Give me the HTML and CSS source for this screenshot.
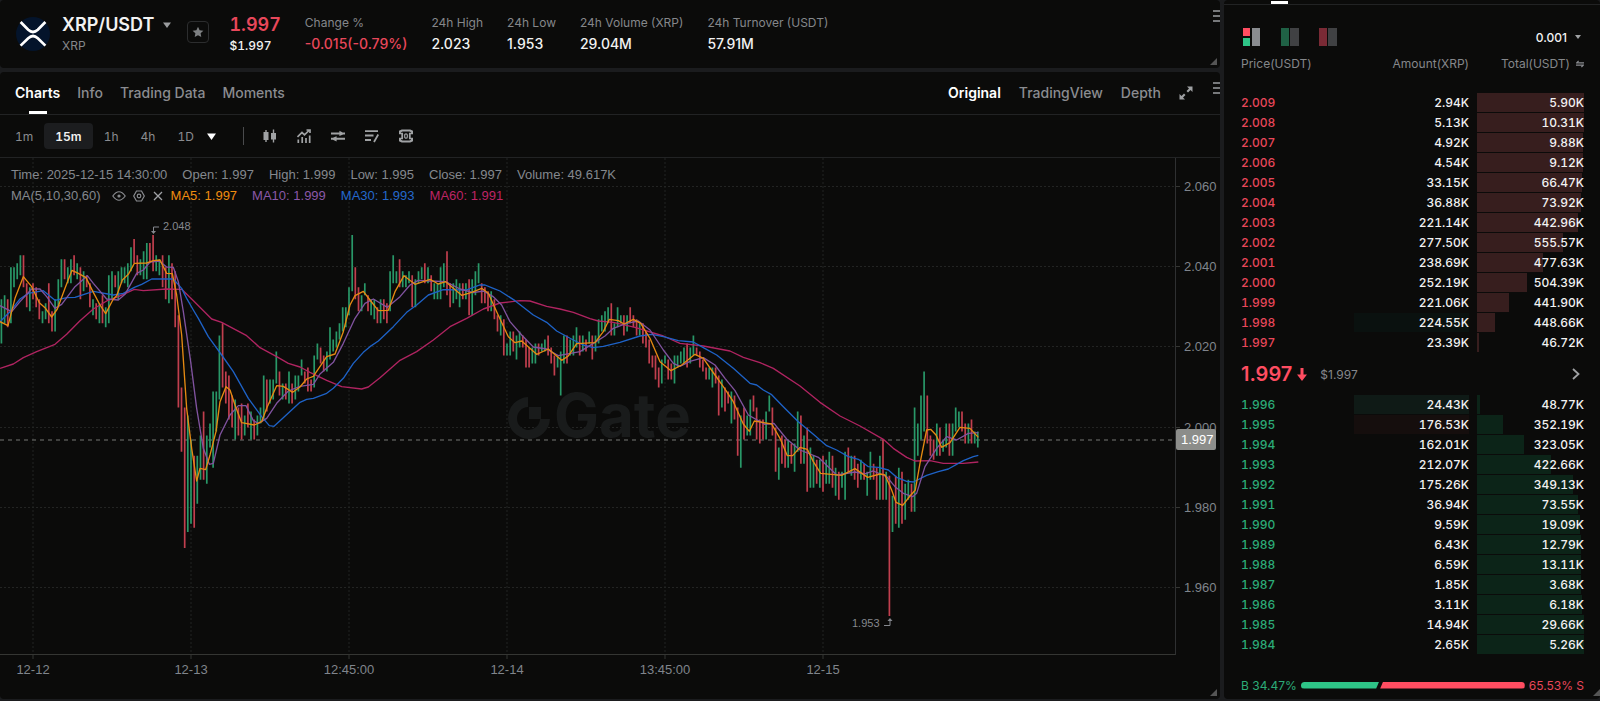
FILE: index.html
```
<!DOCTYPE html>
<html lang="en">
<head>
<meta charset="UTF-8">
<meta name="viewport" content="width=device-width, initial-scale=1">
<title>XRP/USDT</title>
<link rel="stylesheet" href="styles.css">
</head>
<body>
<div class="app">
  <div class="main">

    <header class="panel ticker">
      <svg class="coin" viewBox="0 0 34 34"><circle cx="17" cy="17" r="17" fill="#04142b"/><g fill="none" stroke="#fff" stroke-width="2.7"><path d="M4.6 5l7.6 7.8q4.8 4.4 9.6 0L29.4 5"/><path d="M4.6 28.6l7.6-7.4q4.8-4.4 9.6 0l7.6 7.4"/></g></svg>
      <div class="pair">
        <button class="pair-name">XRP/USDT <svg width="8" height="6" viewBox="0 0 8 6"><path d="M0 .5h8L4 6z" fill="#9a9c9e"/></svg></button>
        <span class="pair-sub">XRP</span>
      </div>
      <button class="star" aria-label="Add to favorites"><svg width="12" height="12" viewBox="0 0 12 12"><path d="M6 .8l1.6 3.4 3.8.5-2.8 2.6.7 3.8L6 9.300l-3.300 1.800.7-3.800L.6 4.700l3.800-.5z" fill="#7e8082"/></svg></button>
      <div class="last">
        <strong class="red">1.997</strong>
        <span>$1.997</span>
      </div>
      <dl class="stats">
        <div><dt>Change %</dt><dd class="red">-0.015(-0.79%)</dd></div>
        <div><dt>24h High</dt><dd>2.023</dd></div>
        <div><dt>24h Low</dt><dd>1.953</dd></div>
        <div><dt>24h Volume (XRP)</dt><dd>29.04M</dd></div>
        <div><dt>24h Turnover (USDT)</dt><dd>57.91M</dd></div>
      </dl>
      <span class="grip"></span>
      <span class="corner"></span>
    </header>

    <section class="panel chart-panel">
      <span class="grip"></span>
      <nav class="tabs">
        <button class="tab active marked">Charts</button>
        <button class="tab">Info</button>
        <button class="tab">Trading Data</button>
        <button class="tab">Moments</button>
        <div class="views">
          <button class="tab active">Original</button>
          <button class="tab">TradingView</button>
          <button class="tab">Depth</button>
          <button class="expand" aria-label="Full screen"><svg width="14" height="14" viewBox="0 0 14 14" fill="#9fa1a3"><path d="M8 .5h5.500V6l-2-2-2.500 2.500-1.500-1.500L10 2.500zM.5 8l2 2L5 7.500 6.500 9 4 11.500l2 2H.5z"/></svg></button>
        </div>
      </nav>

      <div class="toolbar">
        <button class="tf">1m</button>
        <button class="tf active">15m</button>
        <button class="tf">1h</button>
        <button class="tf">4h</button>
        <button class="tf">1D</button>
        <button class="tool more" aria-label="More intervals"><svg width="9" height="7" viewBox="0 0 9 7"><path d="M0 .5h9L4.500 7z" fill="#fff"/></svg></button>
        <span class="divider"></span>
        <button class="tool" aria-label="Candle style"><svg width="14" height="14" viewBox="0 0 14 14" fill="#a0a2a4"><path d="M.5 3h5v8h-5zM2.300 1h1.400v12H2.300zM8 4h5v6.500H8zM9.800.5h1.400v13H9.800z"/></svg></button>
        <button class="tool" aria-label="Indicators"><svg width="14" height="14" viewBox="0 0 14 14" fill="none" stroke="#a0a2a4" stroke-width="1.700"><path d="M.5 8L5 3.500l2.500 2.300L12.500 1M9.500 1H13v3M1.300 10.500V14M5.200 8v6M9 9v5M12.700 6.500V14"/></svg></button>
        <button class="tool" aria-label="Compare"><svg width="14" height="14" viewBox="0 0 15 14" fill="#a0a2a4"><path d="M0 3.300h9V1.300l4 2.300V3.300h2v2h-2L9 7V5.300H0zM15 9H6V7.300L2 9H0v2h2l4 2v-2h9z"/></svg></button>
        <button class="tool" aria-label="Drawing tools"><svg width="14" height="14" viewBox="0 0 14 14" fill="none" stroke="#a0a2a4" stroke-width="1.800"><path d="M0 2.200h13M0 6.500h8.500M0 11h6M13.300 5.500l-4.300 7.500"/></svg></button>
        <button class="tool" aria-label="Settings"><svg width="14" height="14" viewBox="0 0 14 14" fill="none" stroke="#a0a2a4"><path d="M1 4V2.500L3 1.500h8l2 1V4M1 10v1.500l2 1h8l2-1V10" stroke-width="2.200"/><path d="M0 4.500h4M10 4.500h4M0 9.500h4M10 9.500h4" stroke-width="1.600"/><path d="M3.200 4.500v5M10.800 4.500v5" stroke-width="1.800"/><rect x="5.700" y="4.800" width="2.600" height="4.400" rx="1.300" stroke-width="1.200"/></svg></button>
      </div>

      <div class="chart">
        <svg class="plot" id="plot">
          <g class="grid" id="grid"></g>
          <g class="watermark">
            <path d="M528 239a21 21 0 1 0 22 22h-10a11.500 11.500 0 1 1-12-12z"/>
            <rect x="529" y="249" width="12" height="12"/>
            <text x="554" y="279">Gate</text>
          </g>
          <line class="now" x1="0" x2="100%" y1="282" y2="282"/>
          <path id="up" class="up"/>
          <path id="down" class="down"/>
          <!-- moving averages, on a grid three times as fine as the plot -->
          <g class="ma" transform="translate(0 -3) scale(.33333)">
            <polyline class="ma60" points="0,640 40,627 70,608 110,590 165,568 200,538 240,497 280,462 320,438 355,425 403,403 430,407 500,402 545,403 575,432 635,492 665,502 740,542 780,578 830,605 865,625 900,636 930,652 980,676 1025,695 1085,702 1105,696 1140,668 1200,616 1250,590 1300,555 1350,515 1400,490 1450,462 1500,444 1560,437 1590,438 1640,454 1680,462 1720,472 1770,491 1795,498 1840,502 1905,517 1990,543 2040,565 2110,573 2190,588 2230,607 2280,623 2320,640 2400,693 2460,742 2520,783 2580,813 2650,853 2680,880 2720,907 2745,918 2790,917 2830,925 2890,925 2935,921"/>
            <polyline class="ma30" points="0,500 30,470 60,432 85,415 130,407 165,436 200,428 225,427 280,409 340,420 370,415 403,397 425,388 455,372 520,372 545,400 560,430 580,465 595,490 625,545 665,600 700,650 745,730 785,785 808,812 822,814 845,793 900,742 920,733 940,730 980,715 1000,700 1030,670 1060,625 1090,592 1110,575 1135,558 1180,515 1220,472 1250,450 1285,420 1330,404 1400,405 1440,390 1455,390 1480,400 1500,408 1545,437 1600,480 1640,502 1670,528 1720,555 1750,570 1780,578 1810,574 1860,562 1920,543 1955,538 1990,545 2035,557 2080,561 2110,578 2150,600 2200,640 2250,685 2270,690 2290,705 2315,719 2350,755 2395,800 2440,838 2480,872 2510,885 2545,905 2575,913 2605,935 2635,937 2665,945 2690,967 2720,979 2740,981 2780,961 2815,950 2845,942 2890,917 2920,905 2935,901"/>
            <polyline class="ma10" points="0,452 35,470 60,440 95,402 120,402 140,425 165,460 185,448 225,395 262,362 280,385 320,432 355,435 375,418 410,355 430,345 450,321 478,318 500,336 520,337 535,380 550,470 572,620 590,760 610,880 628,928 640,925 660,840 690,780 715,752 738,752 760,797 775,805 800,790 830,745 865,708 900,694 940,688 960,657 1000,622 1030,565 1065,490 1095,445 1120,432 1162,457 1200,425 1230,390 1255,376 1290,378 1337,380 1380,402 1420,413 1450,408 1480,425 1505,450 1530,500 1565,540 1600,576 1640,582 1675,602 1740,590 1780,565 1815,543 1840,520 1880,505 1915,498 1950,525 1990,585 2020,625 2040,634 2070,619 2110,608 2145,630 2175,670 2205,707 2245,780 2280,800 2295,808 2322,805 2360,852 2400,885 2455,907 2510,960 2565,951 2595,957 2620,948 2660,965 2685,995 2710,1015 2738,1025 2750,1015 2775,935 2810,880 2840,845 2870,855 2905,835 2935,833"/>
            <polyline class="ma5" points="0,500 24,512 45,430 70,365 95,395 118,443 135,458 155,486 172,462 195,400 216,346 235,355 258,368 280,412 300,450 317,476 340,432 350,422 367,375 385,358 403,325 440,324 460,317 480,315 500,355 517,356 530,420 545,540 560,760 575,880 590,978 600,940 617,944 630,900 648,830 660,740 678,695 690,705 705,750 725,803 763,810 785,800 800,760 830,692 850,694 878,712 900,696 920,672 940,664 980,605 1005,597 1030,530 1050,450 1065,422 1090,409 1110,435 1135,467 1165,466 1185,410 1212,362 1245,388 1290,373 1315,387 1337,380 1385,421 1415,412 1445,400 1465,415 1490,470 1525,545 1545,563 1565,558 1610,598 1645,582 1685,616 1705,603 1730,566 1785,563 1810,530 1828,493 1855,497 1872,507 1900,493 1922,505 1950,550 1980,620 2013,647 2045,630 2085,598 2110,610 2145,660 2170,695 2200,740 2230,807 2248,829 2263,798 2315,807 2340,850 2362,902 2378,902 2400,877 2422,883 2440,920 2462,955 2525,961 2565,941 2603,967 2640,957 2655,960 2675,1005 2688,1042 2708,1051 2730,1023 2746,1005 2760,925 2780,825 2792,823 2808,840 2825,877 2850,863 2880,817 2910,820 2935,847"/>
          </g>
          <g class="mark">
            <path d="M159 69h-5.500v5"/><path class="head" d="M151 73h5l-2.500 3z"/>
            <text x="163" y="72">2.048</text>
            <path d="M884 467.500h6v-5"/><path class="head" d="M887.500 463h5l-2.500-3z"/>
            <text x="852" y="469">1.953</text>
          </g>
        </svg>
        <svg class="price-axis" id="priceAxis"></svg>
        <svg class="time-axis" id="timeAxis"></svg>
        <div class="legend">
          <p><span>Time: 2025-12-15 14:30:00</span><span>Open: 1.997</span><span>High: 1.999</span><span>Low: 1.995</span><span>Close: 1.997</span><span>Volume: 49.617K</span></p>
          <p>
            <span class="ma-name">MA(5,10,30,60)
              <button aria-label="Hide"><svg width="14" height="12" viewBox="0 0 14 12" fill="none" stroke="#8a8c90" stroke-width="1.200"><path d="M.8 6Q7-2.500 13.200 6 7 14.500.8 6z"/><circle cx="7" cy="6" r="1" fill="#8a8c90"/></svg></button>
              <button aria-label="Settings"><svg width="12" height="12" viewBox="0 0 12 12" fill="none" stroke="#8a8c90" stroke-width="1.200"><path d="M3.500 1h5L11.300 6 8.500 11h-5L.7 6z"/><circle cx="6" cy="6" r="1.800"/></svg></button>
              <button aria-label="Remove"><svg width="12" height="12" viewBox="0 0 12 12" stroke="#a0a2a6" stroke-width="1.300"><path d="M2 2l8 8M10 2l-8 8"/></svg></button>
            </span>
            <span class="c5">MA5: 1.997</span><span class="c10">MA10: 1.999</span><span class="c30">MA30: 1.993</span><span class="c60">MA60: 1.991</span>
          </p>
        </div>
      </div>
      <span class="corner"></span>
    </section>
  </div>

  <aside class="panel book">
    <div class="book-tabs"><span></span></div>
    <div class="book-tools">
      <button aria-label="Both sides"><svg width="18" height="18" viewBox="0 0 18 18"><path d="M0 0h7v8H0z" fill="#ff4d61"/><path d="M0 10h7v8H0z" fill="#2ec487"/><path d="M9 0h8v18H9z" fill="#8a8c90"/></svg></button>
      <button aria-label="Bids only"><svg width="18" height="18" viewBox="0 0 18 18"><path d="M0 0h8v18H0z" fill="#1f6145"/><path d="M9 0h9v18H9z" fill="#404143"/></svg></button>
      <button aria-label="Asks only"><svg width="18" height="18" viewBox="0 0 18 18"><path d="M0 0h8v18H0z" fill="#7a2a35"/><path d="M9 0h9v18H9z" fill="#404143"/></svg></button>
      <label class="step"><select aria-label="Price step"><option>0.001</option><option>0.01</option></select><svg width="6" height="4" viewBox="0 0 6 4"><path d="M0 0h6L3 4z" fill="#a0a2a4"/></svg></label>
    </div>
    <table>
      <thead>
        <tr><th>Price(USDT)</th><th class="amount">Amount(XRP)</th><th class="total">Total(USDT)<svg width="8" height="8" viewBox="0 0 8 8" fill="none" stroke="#8a8c90" stroke-width="1.200"><path d="M8 2.800H.8L2.600.8M0 5.200h7.200L5.400 7.200"/></svg></th></tr>
      </thead>
      <tbody id="asks" class="asks"></tbody>
      <tbody>
        <tr><td colspan="3">
          <div class="mid">
            <strong>1.997</strong>
            <svg width="10" height="13" viewBox="0 0 10 13"><path d="M3.500 0h3v6.500H10L5 13 0 6.500h3.500z" fill="#ff4d61"/></svg>
            <span>$1.997</span>
            <button aria-label="More"><svg width="8" height="12" viewBox="0 0 8 12" fill="none" stroke="#a0a2a4" stroke-width="1.800"><path d="M1 1l5.500 5L1 11"/></svg></button>
          </div>
        </td></tr>
      </tbody>
      <tbody id="bids" class="bids"></tbody>
    </table>
    <div class="ratio">
      <span class="green">B 34.47%</span>
      <div class="ratio-bar"><i class="buy" style="width: 35%"></i><i class="sell"></i></div>
      <span class="red">65.53% S</span>
    </div>
    <span class="corner"></span>
  </aside>
</div>
<script src="chart.js"></script>
</body>
</html>
```
FILE: styles.css
```
* {
  box-sizing: border-box;
}

body {
  margin: 0;
  background: #1b1c1e;
  color: #f2f2f2;
  font-family: Inter, "Liberation Sans", sans-serif;
  font-size: 12px;
}

button, select {
  margin: 0;
  padding: 0;
  border: 0;
  background: none;
  color: inherit;
  font: inherit;
  cursor: pointer;
}

svg {
  display: block;
}

p, dl, dd {
  margin: 0;
}

.app {
  display: grid;
  grid-template-columns: 1fr 376px;
  gap: 4px;
  min-height: 100vh;
  padding-bottom: 2px;
}

.main {
  display: flex;
  flex-direction: column;
  gap: 4px;
  min-width: 0;
}

.panel {
  position: relative;
  background: #0b0b0a;
  border-radius: 4px;
}

.red { color: #e8475a; }
.green { color: #2cab78; }

/* drag handle and resize corner of a panel */
.grip {
  position: absolute;
  top: 10px;
  right: 0;
  width: 7px;
  height: 12px;
  background: repeating-linear-gradient(#77797b 0 2px, transparent 2px 5px);
}

.corner {
  position: absolute;
  right: 3px;
  bottom: 3px;
  border-left: 7px solid transparent;
  border-bottom: 7px solid #555;
}

.book .corner {
  right: 0;
}

/* ticker */
.ticker {
  display: flex;
  align-items: center;
  height: 68px;
  padding-left: 16px;
}

.coin {
  width: 34px;
  height: 34px;
}

.pair {
  display: flex;
  flex-direction: column;
  margin-left: 12px;
}

.pair-name {
  display: flex;
  align-items: center;
  gap: 9px;
  font-size: 18px;
  font-weight: 600;
  line-height: 24px;
}

.pair-sub {
  color: #85878a;
  line-height: 18px;
}

.star {
  display: flex;
  align-items: center;
  justify-content: center;
  width: 22px;
  height: 22px;
  margin: 0 20px 4px 16px;
  border: 1px solid #2c2d2e;
  border-radius: 4px;
}

.last, .toolbar, .cell {
  font-variant-numeric: tabular-nums;
}

.last {
  display: flex;
  flex-direction: column;
  font-weight: 500;
}

.last strong {
  font-size: 18px;
  font-weight: 600;
  line-height: 24px;
}

.last span {
  line-height: 18px;
}

.stats {
  display: flex;
  gap: 24px;
  margin-left: 24px;
}

.stats dt {
  color: #85878a;
  line-height: 20px;
}

.stats dd {
  font-size: 14px;
  font-weight: 500;
  line-height: 22px;
}

/* chart panel */
.chart-panel {
  display: flex;
  flex: 1;
  flex-direction: column;
}

.tabs {
  display: flex;
  gap: 17px;
  height: 43px;
  padding: 0 27px 0 15px;
  border-bottom: 1px solid #222324;
}

.tab {
  position: relative;
  padding-bottom: 2px;
  color: #8a8c90;
  font-size: 14px;
  font-weight: 500;
}

.tab.active {
  color: #fff;
  font-weight: 600;
}

.marked::after {
  content: "";
  position: absolute;
  bottom: 0;
  left: 50%;
  width: 18px;
  height: 3px;
  margin-left: -9px;
  background: #fff;
}

.views {
  display: flex;
  gap: 18px;
  margin-left: auto;
}

.toolbar {
  display: flex;
  align-items: center;
  height: 43px;
  padding-left: 4px;
  border-bottom: 1px solid #222324;
}

.tf {
  height: 26px;
  padding: 0 11px;
  color: #8a8c90;
  font-size: 12px;
}

.tf.active {
  border-radius: 4px;
  background: #1c1d1f;
  color: #f2f2f2;
  font-weight: 600;
}

.more {
  margin-left: 2px;
}

.divider {
  width: 1px;
  height: 18px;
  margin: 0 19px 0 27px;
  background: #4a4b4d;
}

.divider ~ .tool {
  margin-right: 20px;
}

.chart {
  position: relative;
  display: grid;
  flex: 1;
  grid-template-columns: minmax(0, 1fr) 44px;
  grid-template-rows: minmax(0, 1fr) 44px;
  font-family: "Liberation Sans", Arial, sans-serif;
}

.plot {
  width: 100%;
  height: 100%;
  border-right: 1px solid #2f3031;
  border-bottom: 1px solid #353633;
}

.price-axis, .time-axis {
  width: 100%;
  height: 100%;
  font-size: 13px;
  fill: #80858c;
}

.time-axis {
  text-anchor: middle;
}

.price-axis line, .time-axis line {
  stroke: #353633;
}

.price-axis .tag rect { fill: #8c8d8a; }
.price-axis .tag text { fill: #fff; }

.grid line {
  stroke: #232423;
  stroke-dasharray: 2 2;
}

.watermark {
  fill: #191b1b;
  font: 700 60px Inter, sans-serif;
}

.now {
  stroke: #777975;
  stroke-dasharray: 4 4;
}

.up { stroke: #299868; stroke-width: 1.700; }
.down { stroke: #c13f4e; stroke-width: 1.700; }

.ma {
  fill: none;
  stroke-width: 4;
  stroke-linejoin: round;
}

.ma5 { stroke: #e58a12; }
.ma10 { stroke: #80539f; }
.ma30 { stroke: #1e62c6; }
.ma60 { stroke: #b02461; }

.mark {
  fill: #85888e;
  font-size: 11px;
}

.mark path {
  fill: none;
  stroke: #85888e;
}

.mark .head {
  fill: #85888e;
  stroke: none;
}

.legend {
  position: absolute;
  top: 6px;
  left: 11px;
  color: #84888e;
  font-size: 13px;
}

.legend p {
  display: flex;
  gap: 15px;
  line-height: 21px;
}

.ma-name {
  display: flex;
  align-items: center;
  gap: 7px;
  margin-right: -8px;
}

.ma-name button:first-of-type {
  margin-left: 4px;
}

.c5 { color: #f08d10; }
.c10 { color: #8a58a8; }
.c30 { color: #2468cc; }
.c60 { color: #bd2465; }

/* order book */
.book {
  padding: 0 16px 0 17px;
}

.book-tabs {
  height: 5px;
  margin: 0 -16px 0 -17px;
  padding: 1px 0 0 47px;
  border-bottom: 1px solid #222324;
}

.book-tabs span {
  display: block;
  width: 17px;
  height: 3px;
  background: #fff;
}

.book-tools {
  display: flex;
  gap: 20px;
  height: 51px;
  padding: 23px 3px 0 2px;
}

.book-tools button {
  height: 18px;
}

.step {
  display: flex;
  align-items: center;
  gap: 8px;
  height: 18px;
  margin-left: auto;
}

.step select {
  appearance: none;
  color: #f2f2f2;
  font-weight: 500;
  text-align: right;
}

.step option {
  background: #0b0b0a;
}

.book table {
  width: 100%;
  table-layout: fixed;
  border-collapse: collapse;
}

.book th {
  height: 37px;
  padding: 0;
  color: #85878a;
  font-weight: 400;
  line-height: 16px;
  text-align: left;
  vertical-align: top;
}

.book th.amount, .book th.total {
  width: 115px;
  text-align: right;
}

.total svg {
  display: inline-block;
  margin-left: 6px;
}

.book td {
  height: 20px;
  padding: 0;
  font-weight: 500;
  vertical-align: top;
}

.cell {
  position: relative;
  height: 19px;
  line-height: 20px;
  text-align: right;
}

.price {
  text-align: left;
}

.asks .price { color: #e8475a; }
.bids .price { color: #2cab78; }

.total .cell {
  margin-left: 8px;
}

.total .cell span {
  position: relative;
}

.bar {
  position: absolute;
  top: 0;
  left: 0;
  height: 19px;
}

.asks .bar { background: #371e1e; }
.bids .bar { background: #0c2418; }

.flash-up { background: #0f1a16; }
.flash-up-soft { background: #0a110f; }
.flash-down { background: #150e0d; }

.mid {
  display: flex;
  align-items: center;
  height: 42px;
}

.mid strong {
  margin-right: 5px;
  color: #ff4d61;
  font-size: 20px;
  font-weight: 600;
}

.mid span {
  margin-left: 13px;
  color: #85878a;
  font-weight: 400;
}

.mid button {
  margin: 0 4px 0 auto;
}

.ratio {
  display: flex;
  align-items: center;
  gap: 4px;
  height: 20px;
  margin-top: 20px;
}

.ratio-bar {
  display: flex;
  flex: 1;
  height: 7px;
}

.buy {
  border-radius: 4px 0 0 4px;
  background: #2ec487;
  clip-path: polygon(0 0, 100% 0, calc(100% - 3px) 100%, 0 100%);
}

.sell {
  flex: 1;
  border-radius: 0 4px 4px 0;
  background: #ff4d61;
  clip-path: polygon(4px 0, 100% 0, 100% 100%, 1px 100%);
}
```
FILE: chart.js
```
// one candle per 15 minutes: colour, high and low, in thousandths above 1.900
var candles = `
g132-121 g133-126 r132-125 g140-126 g140-135 g141-137 g143-138 r143-135 r136-130 g135-129
r136-132 r135-130 r132-127 g129-126 g131-127 r136-126 r129-124 g132-124 g137-130 g142-135
r142-137 g140-136 g142-136 r143-138 g141-137 r140-132 g139-134 r138-135 r136-130 g132-128
r131-127 g131-126 r133-126 g130-125 g138-126 g139-132 r138-135 g139-132 g140-136 g140-136
g141-135 g145-139 r147-141 r143-138 g142-138 g144-137 g146-137 r146-141 r148-139 g143-139
g142-138 r143-135 r140-132 g143-131 r141-132 r139-125 r128-105 r110-94 r105-70 g103-74
g97-76 r93-75 g93-81 g98-87 r104-87 g98-86 g101-95 g109-90 g109-99 g123-107
r126-110 r114-106 r113-102 r108-100 g107-97 r105-98 r106-97 g103-98 r106-100 g104-97
r102-97 g103-98 g105-101 g113-102 r112-104 g112-106 g112-107 g119-111 r114-108 g111-107
r111-107 g114-106 r111-106 g113-107 g113-109 g117-113 r114-111 r115-109 r112-109 g118-110
g121-117 r120-116 r118-114 g119-114 g125-117 g122-119 g124-120 g126-122 g130-124 g130-125
g135-128 g148-134 r140-132 r135-129 g133-129 g136-133 r133-129 g132-128 g132-127 r130-126
g132-126 r132-127 r131-126 g139-129 g143-136 g139-136 r142-135 g139-135 g138-135 g139-136
r138-130 g137-130 g139-136 g140-137 r141-136 g140-136 r138-134 g136-132 g136-132 g140-132
g141-135 r144-133 r136-130 g136-131 g137-132 g136-130 r136-132 g136-132 r137-128 g137-128
g139-133 g141-136 r136-131 r135-131 r134-129 g134-129 r132-127 r128-124 g128-123 r127-118
g121-118 g124-118 r124-119 g123-117 g124-120 r123-120 r122-115 r120-115 g120-116 g121-116
r121-118 g121-119 g122-119 r123-118 r120-116 r118-113 g118-115 g119-108 g123-116 r123-116
g122-118 g123-118 g125-120 r123-118 g123-119 r122-119 g124-121 r123-117 g123-119 g127-121
g128-124 g129-124 g130-126 r131-123 g126-123 g130-125 g128-126 r128-123 g128-124 r130-126
r128-125 r127-123 g126-123 r126-121 r124-120 r122-116 r118-115 r118-112 r115-110 g117-111
g118-116 r117-112 r116-112 g118-111 g118-115 g119-116 g120-116 r121-115 g120-116 g123-118
r120-118 r119-115 r117-114 r115-112 g115-112 g115-110 r115-111 r113-103 g112-105 r110-104
r109-106 g109-101 r108-102 r105-93 g103-90 r105-97 g103-98 g107-98 r108-104 r105-97
r102-96 r102-97 g104-97 g108-104 r105-98 r100-89 g95-87 r98-91 r97-90 g97-90
r96-91 g96-89 g104-94 r103-91 g98-91 r100-84 g95-85 g93-85 r92-86 g92-85
r93-84 g92-86 g94-86 r93-85 g90-83 r89-82 g89-85 g94-82 r95-89 g93-88
r93-87 r91-85 g92-87 r91-87 g89-83 g94-87 r91-87 r90-82 g93-82 r97-82
g89-82 r88-53 g83-74 r88-76 g90-75 r89-76 g86-77 g87-82 r86-79 g105-79
g101-93 g108-97 g114-99 r108-96 r98-93 r97-92 g101-93 r100-93 g97-94 g101-95
r101-93 g101-93 g105-99 g104-100 r104-99 r101-96 g101-96 r102-96 g99-96 g99-95
`.trim().split(/\s+/);

// price in thousandths above 1.900 -> y
function priceY(p) {
  return 29 + (160 - p) * 4.01;
}

var up = '';
var down = '';
candles.forEach(function (c, i) {
  var p = c.slice(1).split('-');
  var x = (1.4 + i * 3.16).toFixed(1);
  var d = 'M' + x + ' ' + priceY(p[0]).toFixed(1) + 'V' + priceY(p[1]).toFixed(1);
  if (c[0] == 'g') {
    up += d;
  } else {
    down += d;
  }
});
document.getElementById('up').setAttribute('d', up);
document.getElementById('down').setAttribute('d', down);

// grid and axes
var grid = '';
var priceAxis = '';
[160, 140, 120, 100, 80, 60].forEach(function (p) {
  var y = Math.round(priceY(p)) - 0.5;
  grid += '<line x1="0" x2="100%" y1="' + y + '" y2="' + y + '"/>';
  priceAxis += '<line x1="0" x2="4" y1="' + y + '" y2="' + y + '"/>' +
    '<text x="8" y="' + (y + 4) + '">' + ((1900 + p) / 1000).toFixed(3) + '</text>';
});
priceAxis += '<g class="tag"><rect y="271" width="40" height="21" rx="2"/><text x="5" y="286">1.997</text></g>';

var timeAxis = '';
['12-12', '12-13', '12:45:00', '12-14', '13:45:00', '12-15'].forEach(function (t, i) {
  var x = 33 + i * 158;
  grid += '<line x1="' + x + '" x2="' + x + '" y1="0" y2="100%"/>';
  timeAxis += '<line x1="' + x + '" x2="' + x + '" y1="0" y2="4"/><text x="' + x + '" y="19">' + t + '</text>';
});
document.getElementById('grid').innerHTML = grid;
document.getElementById('priceAxis').innerHTML = priceAxis;
document.getElementById('timeAxis').innerHTML = timeAxis;

// order book: price, amount, total, depth %, class of the amount cell
var asks = [
  ['2.009', '2.94K', '5.90K', 100],
  ['2.008', '5.13K', '10.31K', 100],
  ['2.007', '4.92K', '9.88K', 99],
  ['2.006', '4.54K', '9.12K', 99],
  ['2.005', '33.15K', '66.47K', 98],
  ['2.004', '36.88K', '73.92K', 97],
  ['2.003', '221.14K', '442.96K', 94],
  ['2.002', '277.50K', '555.57K', 80],
  ['2.001', '238.69K', '477.63K', 62],
  ['2.000', '252.19K', '504.39K', 47],
  ['1.999', '221.06K', '441.90K', 30],
  ['1.998', '224.55K', '448.66K', 17, 'flash-up-soft'],
  ['1.997', '23.39K', '46.72K', 2]
];
var bids = [
  ['1.996', '24.43K', '48.77K', 3, 'flash-up'],
  ['1.995', '176.53K', '352.19K', 24, 'flash-down'],
  ['1.994', '162.01K', '323.05K', 44],
  ['1.993', '212.07K', '422.66K', 69],
  ['1.992', '175.26K', '349.13K', 90],
  ['1.991', '36.94K', '73.55K', 94],
  ['1.990', '9.59K', '19.09K', 96],
  ['1.989', '6.43K', '12.79K', 97],
  ['1.988', '6.59K', '13.11K', 97],
  ['1.987', '1.85K', '3.68K', 97],
  ['1.986', '3.11K', '6.18K', 98],
  ['1.985', '14.94K', '29.66K', 100],
  ['1.984', '2.65K', '5.26K', 100]
];

function fill(id, rows) {
  document.getElementById(id).innerHTML = rows.map(function (r) {
    return '<tr><td><div class="cell price">' + r[0] + '</div></td>' +
      '<td><div class="cell ' + (r[4] || '') + '">' + r[1] + '</div></td>' +
      '<td class="total"><div class="cell"><i class="bar" style="width:' + r[3] + '%"></i><span>' + r[2] + '</span></div></td></tr>';
  }).join('');
}
fill('asks', asks);
fill('bids', bids);
```
